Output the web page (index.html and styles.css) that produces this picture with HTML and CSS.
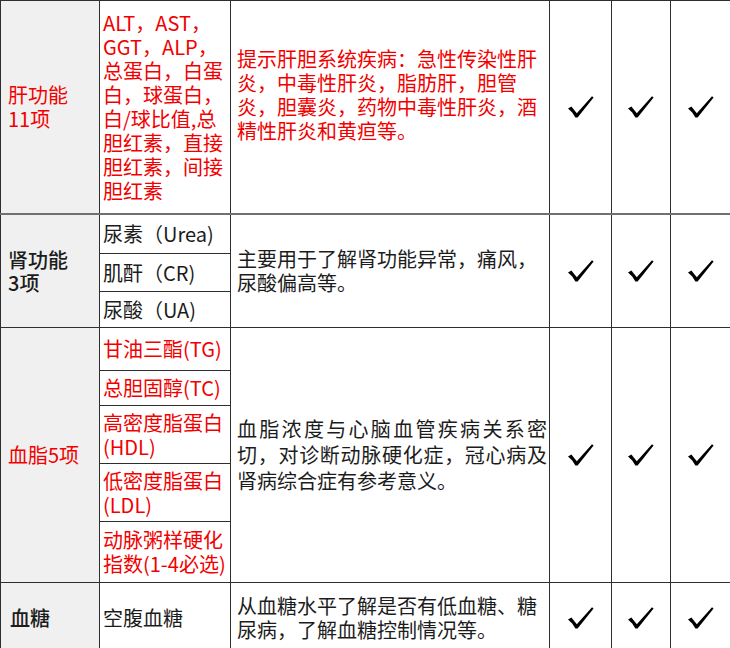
FILE: index.html
```html
<!DOCTYPE html>
<html lang="zh-CN">
<head>
<meta charset="utf-8">
<title>体检项目</title>
<link rel="stylesheet" href="styles.css">
</head>
<body>
<svg class="defs" width="0" height="0" aria-hidden="true">
  <defs>
    <symbol id="tick" viewBox="0 0 26 22">
      <path d="M0 12.4 L3.4 10.4 L8.8 17.2 L24 0.3 L25.6 1.5 L9.6 21.6 L7.4 21.6 L4.2 16.6 Z"/>
    </symbol>
  </defs>
</svg>
<table class="grid">
  <colgroup>
    <col class="c-cat"><col class="c-item"><col class="c-desc"><col class="c-chk"><col class="c-chk2"><col class="c-chk3">
  </colgroup>
  <tbody>
    <tr class="r-liver">
      <th class="cat red">肝功能<br>11项</th>
      <td class="item red nowrap">ALT，AST，<br>GGT，ALP，<br>总蛋白，白蛋<br>白，球蛋白，<br>白/球比值,总<br>胆红素，直接<br>胆红素，间接<br>胆红素</td>
      <td class="desc red desc-liver">提示肝胆系统疾病：急性传染性肝炎，中毒性肝炎，脂肪肝，胆管炎，胆囊炎，药物中毒性肝炎，酒精性肝炎和黄疸等。</td>
      <td class="chk"><svg class="tick"><use href="#tick"/></svg></td>
      <td class="chk"><svg class="tick"><use href="#tick"/></svg></td>
      <td class="chk"><svg class="tick"><use href="#tick"/></svg></td>
    </tr>
    <tr class="r-k1">
      <th class="cat strong" rowspan="3">肾功能<br>3项</th>
      <td class="item">尿素（Urea)</td>
      <td class="desc" rowspan="3">主要用于了解肾功能异常，痛风，尿酸偏高等。</td>
      <td class="chk" rowspan="3"><svg class="tick"><use href="#tick"/></svg></td>
      <td class="chk" rowspan="3"><svg class="tick"><use href="#tick"/></svg></td>
      <td class="chk" rowspan="3"><svg class="tick"><use href="#tick"/></svg></td>
    </tr>
    <tr class="r-k2"><td class="item">肌酐（CR)</td></tr>
    <tr class="r-k3"><td class="item">尿酸（UA)</td></tr>
    <tr class="r-l1">
      <th class="cat red" rowspan="5">血脂5项</th>
      <td class="item red">甘油三酯(TG)</td>
      <td class="desc justify" rowspan="5">血脂浓度与心脑血管疾病关系密切，对诊断动脉硬化症，冠心病及肾病综合症有参考意义。</td>
      <td class="chk" rowspan="5"><svg class="tick"><use href="#tick"/></svg></td>
      <td class="chk" rowspan="5"><svg class="tick"><use href="#tick"/></svg></td>
      <td class="chk" rowspan="5"><svg class="tick"><use href="#tick"/></svg></td>
    </tr>
    <tr class="r-l2"><td class="item red">总胆固醇(TC)</td></tr>
    <tr class="r-l3"><td class="item red">高密度脂蛋白<br>(HDL)</td></tr>
    <tr class="r-l4"><td class="item red">低密度脂蛋白<br>(LDL)</td></tr>
    <tr class="r-l5"><td class="item red nowrap">动脉粥样硬化<br>指数(1-4必选)</td></tr>
    <tr class="r-sugar">
      <th class="cat strong sugar">血糖</th>
      <td class="item">空腹血糖</td>
      <td class="desc">从血糖水平了解是否有低血糖、糖尿病，了解血糖控制情况等。</td>
      <td class="chk"><svg class="tick"><use href="#tick"/></svg></td>
      <td class="chk"><svg class="tick"><use href="#tick"/></svg></td>
      <td class="chk"><svg class="tick"><use href="#tick"/></svg></td>
    </tr>
  </tbody>
</table>
</body>
</html>
```

FILE: styles.css
```css
html, body {
  margin: 0;
  padding: 0;
  background: #ffffff;
}

body {
  font-family: "Noto Sans CJK SC", "Noto Sans", sans-serif;
  font-size: 20px;
  line-height: 24px;
  color: #1c1c1c;
}

.defs {
  position: absolute;
  width: 0;
  height: 0;
  overflow: hidden;
}

.grid {
  border-collapse: collapse;
  table-layout: fixed;
  width: 730px;
}

.c-cat { width: 99px; }
.c-item { width: 131px; }
.c-desc { width: 319px; }
.c-chk { width: 62px; }
.c-chk2 { width: 59px; }
.c-chk3 { width: 60px; }

.grid th,
.grid td {
  border: 1px solid #2e2e2e;
  padding: 0;
  vertical-align: middle;
  text-align: left;
  font-weight: 400;
}

.cat {
  background: #f0f0f0;
  padding-left: 7px !important;
  line-height: 24px;
}

.strong {
  font-weight: 500 !important;
  line-height: 23px;
}

.sugar {
  padding-left: 9px !important;
}

.item {
  padding: 0 1px 0 3px !important;
}

.nowrap {
  white-space: nowrap;
}

.desc {
  padding: 0 2px 0 6px !important;
}

.desc-liver {
  padding-bottom: 24px !important;
}

.justify {
  text-align: justify !important;
  line-height: 26px;
}

.chk {
  text-align: center !important;
}

.tick {
  display: block;
  width: 26px;
  height: 22px;
  margin: 0 auto;
  fill: #000000;
}

.red {
  color: #f20000;
}

.r-liver > th,
.r-liver > td {
  border-bottom: 2px solid #707070;
}

.r-liver { height: 213px; }
.r-k1 { height: 40px; }
.r-k2 { height: 38px; }
.r-k3 { height: 36px; }
.r-l1 { height: 43px; }
.r-l2 { height: 35px; }
.r-l3 { height: 58px; }
.r-l4 { height: 58px; }
.r-l5 { height: 61px; }
.r-sugar { height: 70px; }
```
